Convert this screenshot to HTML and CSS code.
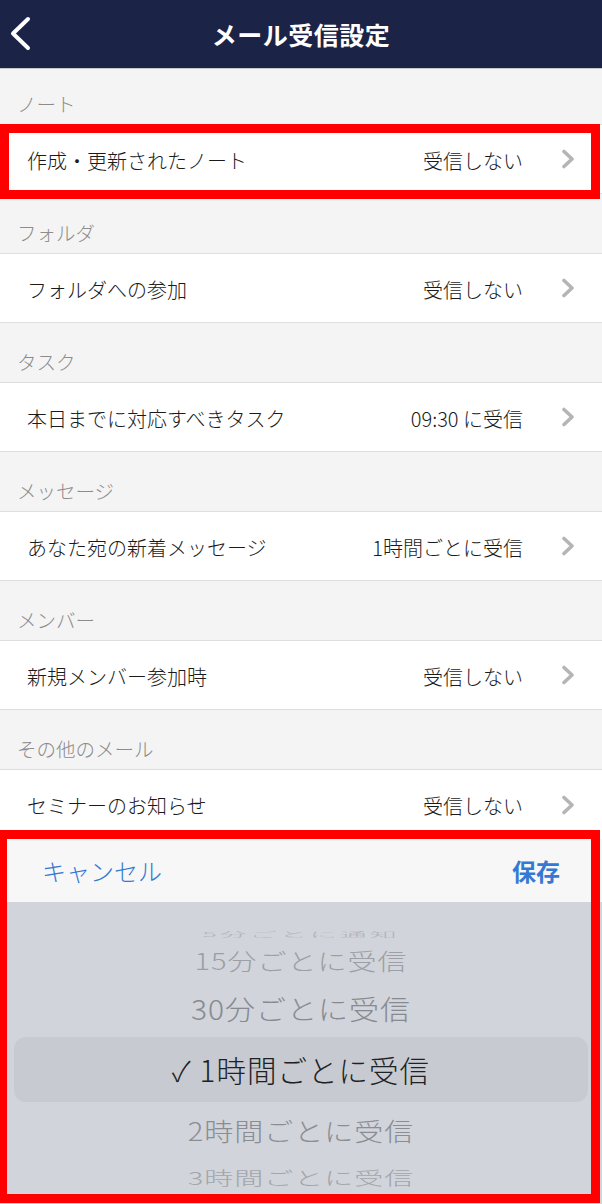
FILE: index.html
```html
<!DOCTYPE html>
<html lang="ja">
<head>
<meta charset="utf-8">
<title>メール受信設定</title>
<link rel="stylesheet" href="styles.css">
</head>
<body>
<div class="screen">
  <header class="navbar">
    <button class="back" aria-label="戻る">
      <svg width="26" height="40" viewBox="0 0 26 40"><polyline points="21,5 6,19.5 21,34" fill="none" stroke="#fff" stroke-width="4" stroke-linecap="round" stroke-linejoin="round"/></svg>
    </button>
    <h1 class="title">メール受信設定</h1>
    <span></span>
  </header>

  <div class="list">
    <div class="section-head first">ノート</div>
    <div class="row"><span class="label">作成・更新されたノート</span><span class="value">受信しない</span><svg class="chev" width="14" height="20" viewBox="0 0 14 20"><polyline points="3,2.5 11,10 3,17.5" fill="none" stroke="#b5b5b5" stroke-width="3.6" stroke-linecap="round" stroke-linejoin="round"/></svg></div>

    <div class="section-head">フォルダ</div>
    <div class="row"><span class="label">フォルダへの参加</span><span class="value">受信しない</span><svg class="chev" width="14" height="20" viewBox="0 0 14 20"><polyline points="3,2.5 11,10 3,17.5" fill="none" stroke="#b5b5b5" stroke-width="3.6" stroke-linecap="round" stroke-linejoin="round"/></svg></div>

    <div class="section-head">タスク</div>
    <div class="row"><span class="label">本日までに対応すべきタスク</span><span class="value">09:30 に受信</span><svg class="chev" width="14" height="20" viewBox="0 0 14 20"><polyline points="3,2.5 11,10 3,17.5" fill="none" stroke="#b5b5b5" stroke-width="3.6" stroke-linecap="round" stroke-linejoin="round"/></svg></div>

    <div class="section-head">メッセージ</div>
    <div class="row"><span class="label">あなた宛の新着メッセージ</span><span class="value">1時間ごとに受信</span><svg class="chev" width="14" height="20" viewBox="0 0 14 20"><polyline points="3,2.5 11,10 3,17.5" fill="none" stroke="#b5b5b5" stroke-width="3.6" stroke-linecap="round" stroke-linejoin="round"/></svg></div>

    <div class="section-head">メンバー</div>
    <div class="row"><span class="label">新規メンバー参加時</span><span class="value">受信しない</span><svg class="chev" width="14" height="20" viewBox="0 0 14 20"><polyline points="3,2.5 11,10 3,17.5" fill="none" stroke="#b5b5b5" stroke-width="3.6" stroke-linecap="round" stroke-linejoin="round"/></svg></div>

    <div class="section-head">その他のメール</div>
    <div class="row"><span class="label">セミナーのお知らせ</span><span class="value">受信しない</span><svg class="chev" width="14" height="20" viewBox="0 0 14 20"><polyline points="3,2.5 11,10 3,17.5" fill="none" stroke="#b5b5b5" stroke-width="3.6" stroke-linecap="round" stroke-linejoin="round"/></svg></div>
  </div>

  <div class="sheet">
    <div class="toolbar">
      <span class="cancel">キャンセル</span>
      <span class="save">保存</span>
    </div>
    <div class="picker">
      <div class="opt o-a"><span>5分ごとに通知</span></div>
      <div class="opt o-b"><span>15分ごとに受信</span></div>
      <div class="opt o-c"><span>30分ごとに受信</span></div>
      <div class="opt o-sel"><span><span class="check">✓</span>1時間ごとに受信</span></div>
      <div class="opt o-e"><span>2時間ごとに受信</span></div>
      <div class="opt o-f"><span>3時間ごとに受信</span></div>
    </div>
  </div>

  <div class="mark mark-row"></div>
  <div class="mark mark-sheet"></div>
</div>
</body>
</html>
```

FILE: styles.css
```css
* { box-sizing: border-box; }
html, body {
  margin: 0;
  padding: 0;
  background: #f4f4f4;
}
body {
  font-family: "Noto Sans CJK JP", "Noto Sans", sans-serif;
  font-weight: 300;
  color: #1d1d1d;
}
.screen {
  position: relative;
  width: 602px;
  height: 1204px;
  overflow: hidden;
  display: flex;
  flex-direction: column;
  background: #f4f4f4;
}

/* nav */
.navbar {
  height: 69px;
  flex: none;
  background: #1b2447;
  border-bottom: 1px solid #c9c9cc;
  display: grid;
  grid-template-columns: 80px 1fr 80px;
  align-items: center;
}
.back {
  background: none;
  border: 0;
  padding: 0 0 0 7px;
  margin: 0;
  height: 40px;
  display: flex;
  align-items: center;
  justify-content: flex-start;
}
.back svg { display: block; }
.title {
  margin: 0;
  text-align: center;
  color: #fff;
  font-size: 25px;
  font-weight: 700;
  line-height: 30px;
  letter-spacing: 0.5px;
}

/* list */
.list {
  display: flex;
  flex-direction: column;
  flex: none;
}
.section-head {
  height: 60px;
  display: flex;
  align-items: flex-end;
  padding: 0 0 7px 17px;
  font-size: 19.5px;
  line-height: 26px;
  color: #8c8c8c;
  border-bottom: 1px solid #dedede;
  background: #f4f4f4;
}
.section-head.first { height: 56px; padding-bottom: 7px; }
.row {
  height: 69px;
  display: flex;
  align-items: center;
  background: #fff;
  padding: 3px 27px 0 27px;
  border-bottom: 1px solid #dedede;
  font-size: 20px;
  line-height: 26px;
  color: #1a1a1a;
}
.row:last-child { border-bottom: 0; height: 69px; }
.label { flex: 1; }
.value { margin-right: 38px; }
.chev { display: block; flex: none; margin-top: -3px; }

/* bottom sheet */
.sheet {
  flex: 1;
  display: flex;
  flex-direction: column;
}
.toolbar {
  height: 63px;
  flex: none;
  background: #f7f7f7;
  display: flex;
  align-items: center;
  justify-content: space-between;
  padding: 0 42px;
  font-size: 24px;
  line-height: 30px;
  color: #3479d3;
}
.save { font-weight: 700; }
.picker {
  flex: 1;
  background: #d1d4da;
  display: flex;
  flex-direction: column;
  padding-top: 25px;
}
.opt {
  display: flex;
  align-items: center;
  justify-content: center;
  font-size: 29px;
  line-height: 34px;
  letter-spacing: 1px;
  color: #888b91;
  overflow: visible;
}
.opt > span { display: inline-block; white-space: nowrap; }
.o-a { height: 14px; color: #b0b3b9; }
.o-a > span { transform: scaleY(0.24); font-size: 27px; letter-spacing: 3px; }
.o-b { height: 38px; color: #9c9fa5; }
.o-b > span { transform: scaleY(0.78); }
.o-c { height: 58px; color: #878a90; }
.o-c > span { transform: scaleY(0.92); font-size: 30px; }
.o-sel {
  height: 65px;
  margin: 0 14px;
  border-radius: 12px;
  background: #c7cad0;
  color: #202124;
  font-size: 29.5px;
}
.check { margin-right: 8px; font-size: 28px; }
.o-e { height: 56px; color: #8a8d93; }
.o-e > span { transform: scaleY(0.88); }
.o-f { height: 38px; color: #a2a5ab; }
.o-f > span { transform: scaleY(0.62); }

/* annotation overlays */
.mark {
  position: absolute;
  border: 9px solid #ff0000;
  pointer-events: none;
}
.mark-row {
  left: 0;
  top: 124px;
  width: 600px;
  height: 75px;
}
.mark-sheet {
  left: 0;
  top: 830px;
  width: 600px;
  height: 373px;
  border-left-width: 7px;
}
```
